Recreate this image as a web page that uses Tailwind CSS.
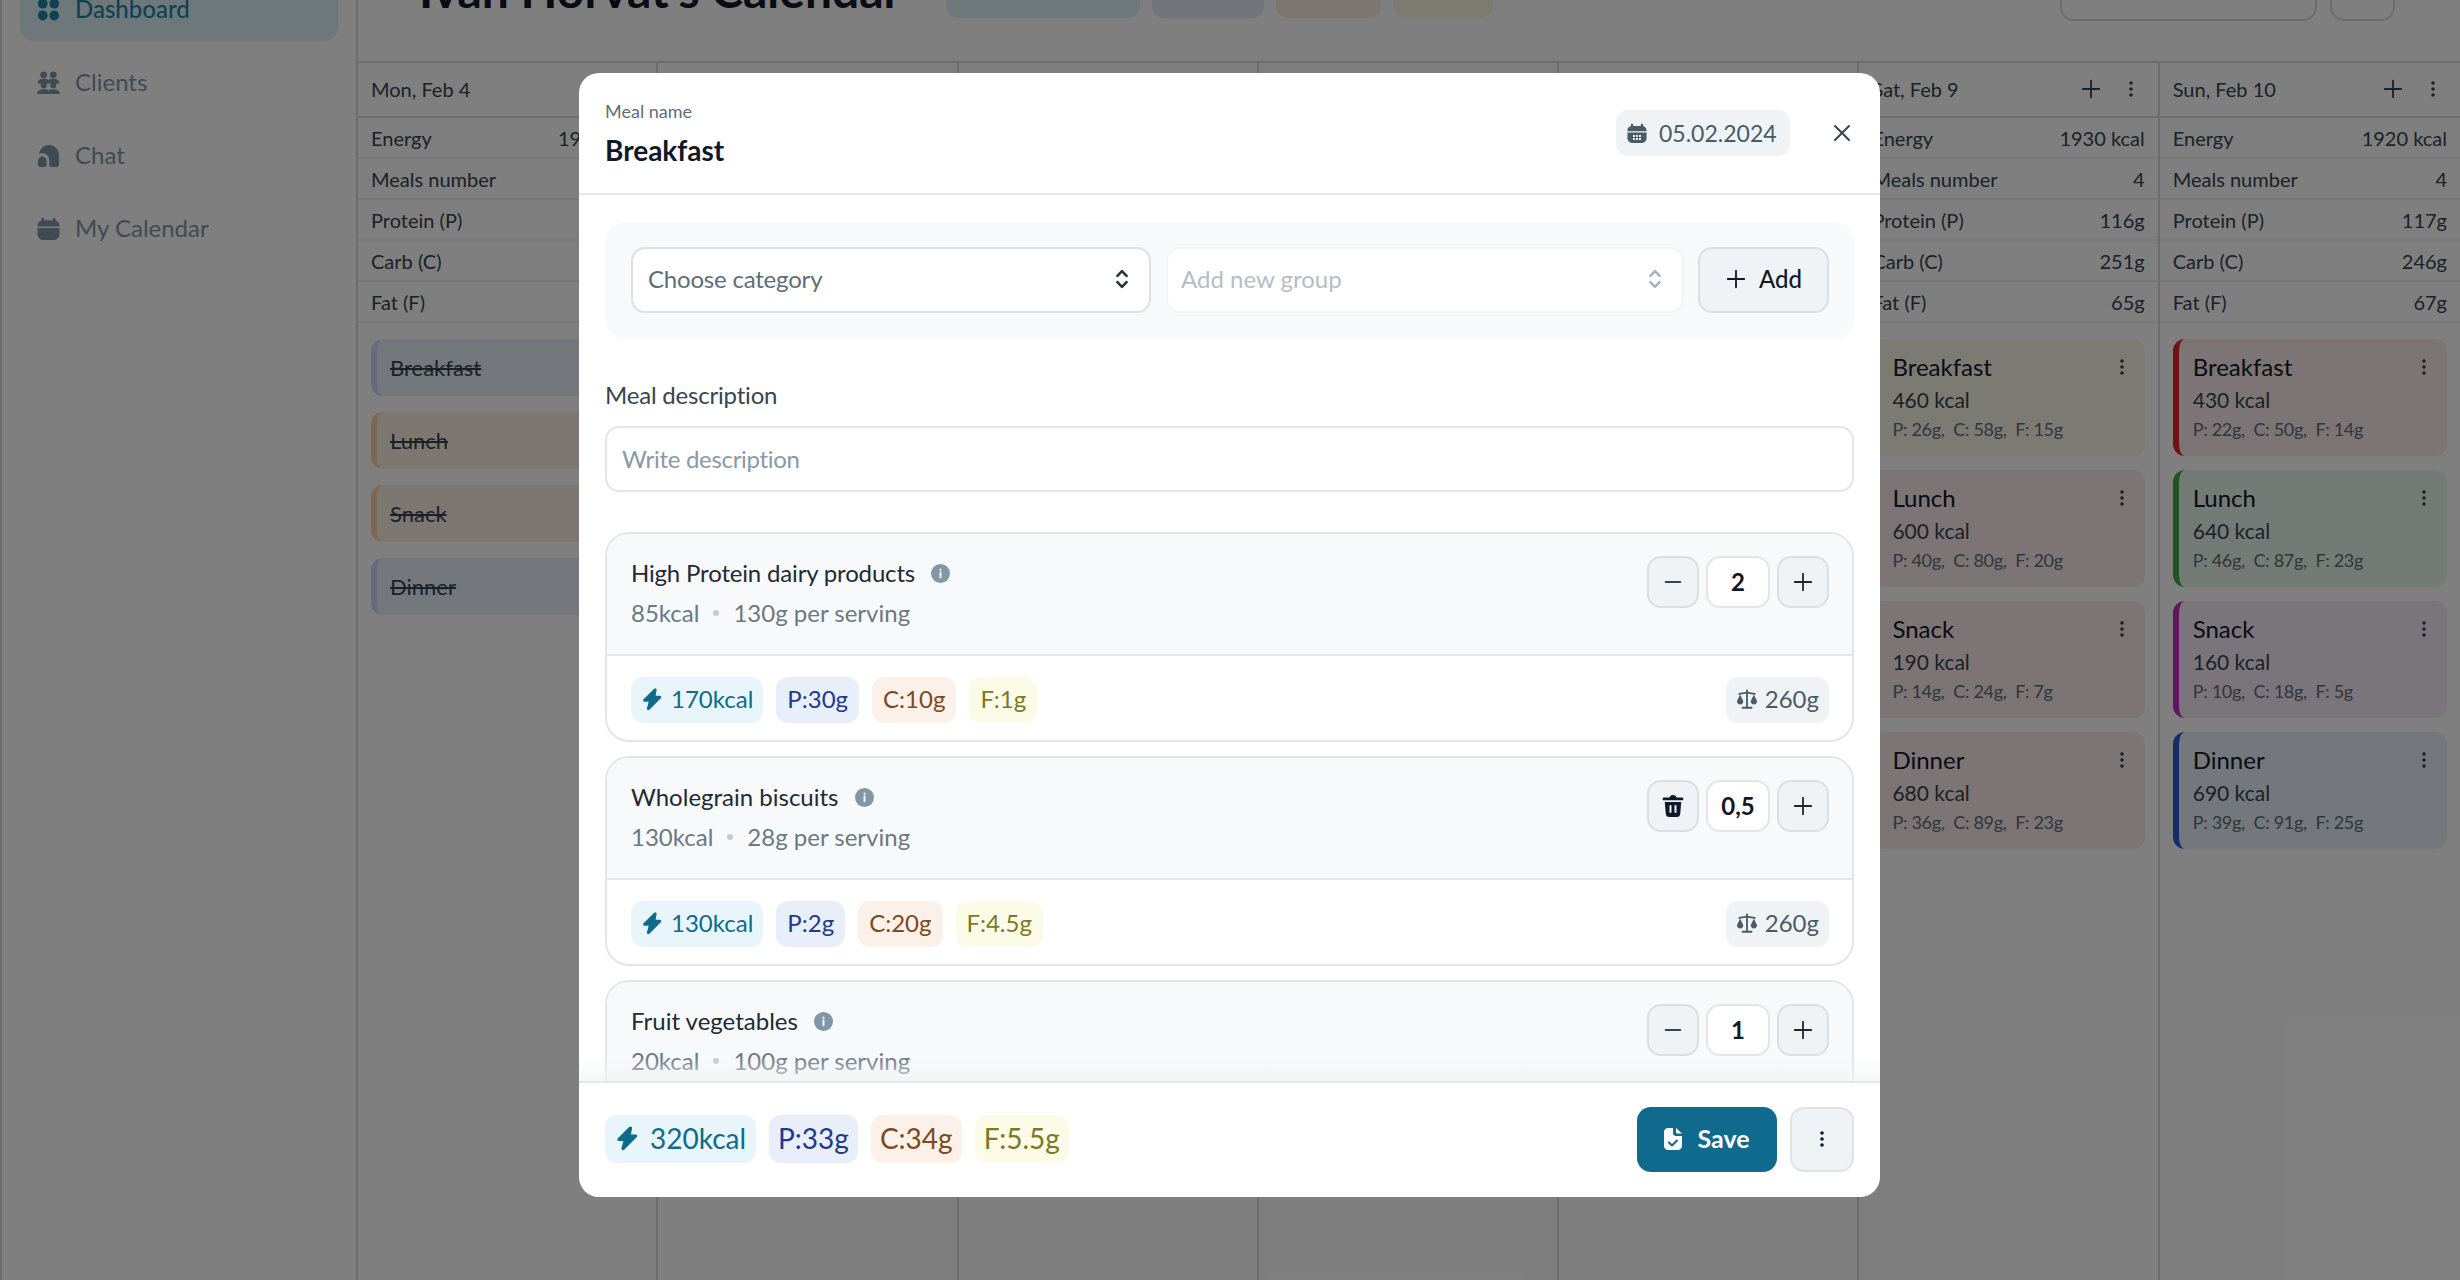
<!DOCTYPE html>
<html lang="en">
<head>
<meta charset="utf-8">
<title>Ivan Horvat's Calendar</title>
<script src="https://cdn.jsdelivr.net/npm/@tailwindcss/browser@4"></script>
</head>
<body class="relative w-[2460px] h-[1280px] overflow-hidden bg-white font-['Lato','Noto_Sans',sans-serif] text-[24px] text-[#37454f]">

<!-- Icon sprites -->
<svg class="hidden">
    <symbol id="i-grid" viewBox="0 0 24 24"><rect x="1" y="0.5" width="10" height="10.5" rx="5"/><rect x="13" y="0.5" width="10" height="10.5" rx="5"/><rect x="1" y="13" width="10" height="10.5" rx="5"/><rect x="13" y="13" width="10" height="10.5" rx="5"/></symbol>
    <symbol id="i-users" viewBox="0 0 24 24"><circle cx="7" cy="4" r="3.500"/><circle cx="17" cy="4" r="3.500"/><path d="M.5 12.500C1 9 3.500 8 7 8c2.200 0 4 .4 5 1.500C13 8.400 14.800 8 17 8c3.500 0 6 1 6.500 4.500-1.200.8-3.500 1.200-6.500 1.200-2.200 0-4-.3-5-.9-1 .6-2.800.9-5 .9-3 0-5.300-.4-6.500-1.200z"/><circle cx="7" cy="15" r="3"/><circle cx="17" cy="15" r="3"/><path d="M0 24c.3-3.500 3-5 7-5 2.200 0 4 .5 5 1.500 1-1 2.800-1.500 5-1.500 4 0 6.700 1.500 7 5z"/></symbol>
    <symbol id="i-chat" viewBox="0 0 24 24"><path d="M1 18c0-2.800 2-5 4.500-5S10 15.200 10 18v3c0 1.700-1.300 3-3 3H4c-1.700 0-3-1.300-3-3z"/><path d="M2 10.500C3 4.500 7.500 1 12.500 1 18.500 1 23 5.500 23 12v9c0 1.700-1.300 3-3 3h-5c-1.300 0-2.200-1-2.200-2.300V17c0-4.500-3.500-7.500-7.500-7.500-1.200 0-2.300.4-3.300 1z"/></symbol>
    <symbol id="i-calendar" viewBox="0 0 24 24"><path d="M6 .8c.8 0 1.400.6 1.400 1.400v1.300h9.200V2.200c0-.8.6-1.400 1.400-1.400s1.400.6 1.400 1.400v1.600c2.500.5 4.100 2.500 4.100 5v1H.500v-1c0-2.500 1.600-4.500 4.100-5V2.200C4.600 1.400 5.200.8 6 .8z"/><path d="M.5 11.500h23V18c0 3.300-2.700 6-6 6h-11c-3.300 0-6-2.700-6-6z"/></symbol>
    <symbol id="i-bolt" viewBox="0 0 24 24"><path d="M15.500 2 4 13.500h6.500L8 22.500 20.500 10H14z" stroke="currentColor" stroke-width="3.200" stroke-linejoin="round"/></symbol>
    <symbol id="i-scale" viewBox="0 0 24 24"><path d="M12 2.500V21M7 21.500h10M3.500 6.500 12 5l8.500 1.500" fill="none" stroke="currentColor" stroke-width="2" stroke-linecap="round"/><path d="M4.500 7 1 14.500c0 2.200 1.600 3.500 3.500 3.500S8 16.700 8 14.500zM19.500 7 16 14.500c0 2.200 1.600 3.500 3.500 3.500s3.500-1.300 3.500-3.500z"/></symbol>
    <symbol id="i-plus" viewBox="0 0 24 24"><path d="M12 3v18M3 12h18" fill="none" stroke="currentColor" stroke-width="2" stroke-linecap="round"/></symbol>
    <symbol id="i-dots" viewBox="0 0 24 24"><circle cx="12" cy="4" r="2.400"/><circle cx="12" cy="12" r="2.400"/><circle cx="12" cy="20" r="2.400"/></symbol>
    <symbol id="i-updown" viewBox="0 0 24 24"><path d="m7 8.500 5-5 5 5M7 15.500l5 5 5-5" fill="none" stroke="currentColor" stroke-width="2.800" stroke-linecap="round" stroke-linejoin="round"/></symbol>
</svg>

<!-- Page behind the modal, scrolled down a little -->
<div class="flex -mt-[40px] h-[1320px]">
    <!-- Sidebar -->
    <aside class="w-[358px] shrink-0 border-l-2 border-r-2 border-[#dadada] pl-[18px] pr-[20px] pt-[17px] flex flex-col gap-[9px] text-[#7f97a7]">
        <a class="h-[64px] w-[318px] rounded-[14px] bg-[#dcf0f4] flex items-center gap-[15px] pl-[17px] text-[#1a85a8] font-medium">
            <svg class="w-[23px] h-[23px] fill-current"><use href="#i-grid"/></svg>Dashboard
        </a>
        <a class="h-[64px] flex items-center gap-[15px] pl-[17px]">
            <svg class="w-[23px] h-[23px] fill-current"><use href="#i-users"/></svg>Clients
        </a>
        <a class="h-[64px] flex items-center gap-[15px] pl-[17px]">
            <svg class="w-[23px] h-[23px] fill-current"><use href="#i-chat"/></svg>Chat
        </a>
        <a class="h-[64px] flex items-center gap-[15px] pl-[17px]">
            <svg class="w-[23px] h-[23px] fill-current"><use href="#i-calendar"/></svg>My Calendar
        </a>
    </aside>

    <main class="flex-1 min-w-0">
        <header class="h-[61px] mb-[40px] flex items-end pl-[61px] pr-[65px]">
            <h1 class="text-[48px] leading-[52px] font-bold text-[#111827] w-[527px] mb-[5px]">Ivan Horvat's Calendar</h1>
            <div class="flex gap-[12px] mb-[3px]">
                <span class="w-[194px] h-[46px] rounded-[12px] bg-[#dff0f4]"></span>
                <span class="w-[112px] h-[46px] rounded-[12px] bg-[#e2e9f6]"></span>
                <span class="w-[105px] h-[46px] rounded-[12px] bg-[#f8ebe0]"></span>
                <span class="w-[100px] h-[46px] rounded-[12px] bg-[#f8f7e2]"></span>
            </div>
            <div class="ml-auto flex gap-[13px]">
                <span class="w-[257px] h-[66px] rounded-[14px] border-2 border-[#d5dadd]"></span>
                <span class="w-[65px] h-[66px] rounded-[14px] border-2 border-[#d5dadd]"></span>
            </div>
        </header>

        <div class="grid grid-cols-7 border-t-2 border-[#dadada] h-[1219px] text-[20px]">
            <!-- Mon -->
            <section class="border-r-2 border-[#dadada]">
                <div class="h-[55px] border-b-2 border-[#dadada] flex items-center px-[13px] pb-[2px]">Mon, Feb 4</div>
                <div class="h-[41px] border-b-2 border-[#eeeeee] flex items-center justify-between px-[13px]"><span>Energy</span><span>1950 kcal</span></div>
                <div class="h-[41px] border-b-2 border-[#eeeeee] flex items-center justify-between px-[13px]"><span>Meals number</span><span>4</span></div>
                <div class="h-[41px] border-b-2 border-[#eeeeee] flex items-center justify-between px-[13px]"><span>Protein (P)</span><span>118g</span></div>
                <div class="h-[41px] border-b-2 border-[#eeeeee] flex items-center justify-between px-[13px]"><span>Carb (C)</span><span>250g</span></div>
                <div class="h-[41px] border-b-2 border-[#eeeeee] flex items-center justify-between px-[13px]"><span>Fat (F)</span><span>66g</span></div>
                <div class="px-[13px] pt-[16px] flex flex-col gap-[16px] text-[22px]">
                    <div class="h-[57px] rounded-[12px] border-l-[6px] border-[#c8d8ff] bg-[#e8eef6] flex items-center pl-[13px] line-through">Breakfast</div>
                    <div class="h-[57px] rounded-[12px] border-l-[6px] border-[#ffcfa8] bg-[#faeee4] flex items-center pl-[13px] line-through">Lunch</div>
                    <div class="h-[57px] rounded-[12px] border-l-[6px] border-[#ffcfa8] bg-[#faeee4] flex items-center pl-[13px] line-through">Snack</div>
                    <div class="h-[57px] rounded-[12px] border-l-[6px] border-[#c8d8ff] bg-[#e8eef6] flex items-center pl-[13px] line-through">Dinner</div>
                </div>
            </section>
            <section class="border-r-2 border-[#dadada]"></section>
            <section class="border-r-2 border-[#dadada]"></section>
            <section class="border-r-2 border-[#dadada]"></section>
            <section class="border-r-2 border-[#dadada]"></section>

            <!-- Sat -->
            <section class="border-r-2 border-[#dadada]">
                <div class="h-[55px] border-b-2 border-[#dadada] flex items-center justify-between pl-[13px] pr-[18px] pb-[2px]">
                    <span>Sat, Feb 9</span>
                    <span class="flex items-center gap-[20px]"><svg class="w-[22px] h-[22px] text-[#37454f]"><use href="#i-plus"/></svg><svg class="w-[18px] h-[18px] fill-current"><use href="#i-dots"/></svg></span>
                </div>
                <div class="h-[41px] border-b-2 border-[#eeeeee] flex items-center justify-between px-[13px]"><span>Energy</span><span>1930 kcal</span></div>
                <div class="h-[41px] border-b-2 border-[#eeeeee] flex items-center justify-between px-[13px]"><span>Meals number</span><span>4</span></div>
                <div class="h-[41px] border-b-2 border-[#eeeeee] flex items-center justify-between px-[13px]"><span>Protein (P)</span><span>116g</span></div>
                <div class="h-[41px] border-b-2 border-[#eeeeee] flex items-center justify-between px-[13px]"><span>Carb (C)</span><span>251g</span></div>
                <div class="h-[41px] border-b-2 border-[#eeeeee] flex items-center justify-between px-[13px]"><span>Fat (F)</span><span>65g</span></div>
                <div class="px-[13px] pt-[16px] flex flex-col gap-[14px]">
                    <div class="h-[117px] rounded-[12px] border-l-[6px] border-[#f7f7e8] bg-[#f7f7e8] pl-[14px] pr-[13px] pt-[11px] relative">
                        <p class="leading-[34px] text-[24px] text-[#111827]">Breakfast</p><p class="leading-[32px] text-[21px]">460 kcal</p><p class="leading-[26px] text-[18px] tracking-[-0.3px] text-[#5e6e78]">P: 26g,&nbsp; C: 58g,&nbsp; F: 15g</p>
                        <svg class="absolute top-[19px] right-[14px] w-[18px] h-[18px] fill-current"><use href="#i-dots"/></svg>
                    </div>
                    <div class="h-[117px] rounded-[12px] border-l-[6px] border-[#f9e8ea] bg-[#f9e8ea] pl-[14px] pr-[13px] pt-[11px] relative">
                        <p class="leading-[34px] text-[24px] text-[#111827]">Lunch</p><p class="leading-[32px] text-[21px]">600 kcal</p><p class="leading-[26px] text-[18px] tracking-[-0.3px] text-[#5e6e78]">P: 40g,&nbsp; C: 80g,&nbsp; F: 20g</p>
                        <svg class="absolute top-[19px] right-[14px] w-[18px] h-[18px] fill-current"><use href="#i-dots"/></svg>
                    </div>
                    <div class="h-[117px] rounded-[12px] border-l-[6px] border-[#f9e8ea] bg-[#f9e8ea] pl-[14px] pr-[13px] pt-[11px] relative">
                        <p class="leading-[34px] text-[24px] text-[#111827]">Snack</p><p class="leading-[32px] text-[21px]">190 kcal</p><p class="leading-[26px] text-[18px] tracking-[-0.3px] text-[#5e6e78]">P: 14g,&nbsp; C: 24g,&nbsp; F: 7g</p>
                        <svg class="absolute top-[19px] right-[14px] w-[18px] h-[18px] fill-current"><use href="#i-dots"/></svg>
                    </div>
                    <div class="h-[117px] rounded-[12px] border-l-[6px] border-[#f9e8ea] bg-[#f9e8ea] pl-[14px] pr-[13px] pt-[11px] relative">
                        <p class="leading-[34px] text-[24px] text-[#111827]">Dinner</p><p class="leading-[32px] text-[21px]">680 kcal</p><p class="leading-[26px] text-[18px] tracking-[-0.3px] text-[#5e6e78]">P: 36g,&nbsp; C: 89g,&nbsp; F: 23g</p>
                        <svg class="absolute top-[19px] right-[14px] w-[18px] h-[18px] fill-current"><use href="#i-dots"/></svg>
                    </div>
                </div>
            </section>

            <!-- Sun -->
            <section>
                <div class="h-[55px] border-b-2 border-[#dadada] flex items-center justify-between pl-[13px] pr-[18px] pb-[2px]">
                    <span>Sun, Feb 10</span>
                    <span class="flex items-center gap-[20px]"><svg class="w-[22px] h-[22px] text-[#37454f]"><use href="#i-plus"/></svg><svg class="w-[18px] h-[18px] fill-current"><use href="#i-dots"/></svg></span>
                </div>
                <div class="h-[41px] border-b-2 border-[#eeeeee] flex items-center justify-between px-[13px]"><span>Energy</span><span>1920 kcal</span></div>
                <div class="h-[41px] border-b-2 border-[#eeeeee] flex items-center justify-between px-[13px]"><span>Meals number</span><span>4</span></div>
                <div class="h-[41px] border-b-2 border-[#eeeeee] flex items-center justify-between px-[13px]"><span>Protein (P)</span><span>117g</span></div>
                <div class="h-[41px] border-b-2 border-[#eeeeee] flex items-center justify-between px-[13px]"><span>Carb (C)</span><span>246g</span></div>
                <div class="h-[41px] border-b-2 border-[#eeeeee] flex items-center justify-between px-[13px]"><span>Fat (F)</span><span>67g</span></div>
                <div class="px-[13px] pt-[16px] flex flex-col gap-[14px]">
                    <div class="h-[117px] rounded-[12px] border-l-[6px] border-[#e02424] bg-[#f9e8ea] pl-[14px] pr-[13px] pt-[11px] relative">
                        <p class="leading-[34px] text-[24px] text-[#111827]">Breakfast</p><p class="leading-[32px] text-[21px]">430 kcal</p><p class="leading-[26px] text-[18px] tracking-[-0.3px] text-[#5e6e78]">P: 22g,&nbsp; C: 50g,&nbsp; F: 14g</p>
                        <svg class="absolute top-[19px] right-[14px] w-[18px] h-[18px] fill-current"><use href="#i-dots"/></svg>
                    </div>
                    <div class="h-[117px] rounded-[12px] border-l-[6px] border-[#3cae3c] bg-[#e8f4ec] pl-[14px] pr-[13px] pt-[11px] relative">
                        <p class="leading-[34px] text-[24px] text-[#111827]">Lunch</p><p class="leading-[32px] text-[21px]">640 kcal</p><p class="leading-[26px] text-[18px] tracking-[-0.3px] text-[#5e6e78]">P: 46g,&nbsp; C: 87g,&nbsp; F: 23g</p>
                        <svg class="absolute top-[19px] right-[14px] w-[18px] h-[18px] fill-current"><use href="#i-dots"/></svg>
                    </div>
                    <div class="h-[117px] rounded-[12px] border-l-[6px] border-[#c42cc4] bg-[#f4e8f6] pl-[14px] pr-[13px] pt-[11px] relative">
                        <p class="leading-[34px] text-[24px] text-[#111827]">Snack</p><p class="leading-[32px] text-[21px]">160 kcal</p><p class="leading-[26px] text-[18px] tracking-[-0.3px] text-[#5e6e78]">P: 10g,&nbsp; C: 18g,&nbsp; F: 5g</p>
                        <svg class="absolute top-[19px] right-[14px] w-[18px] h-[18px] fill-current"><use href="#i-dots"/></svg>
                    </div>
                    <div class="h-[117px] rounded-[12px] border-l-[6px] border-[#2c5ad0] bg-[#e8eef6] pl-[14px] pr-[13px] pt-[11px] relative">
                        <p class="leading-[34px] text-[24px] text-[#111827]">Dinner</p><p class="leading-[32px] text-[21px]">690 kcal</p><p class="leading-[26px] text-[18px] tracking-[-0.3px] text-[#5e6e78]">P: 39g,&nbsp; C: 91g,&nbsp; F: 25g</p>
                        <svg class="absolute top-[19px] right-[14px] w-[18px] h-[18px] fill-current"><use href="#i-dots"/></svg>
                    </div>
                </div>
            </section>
        </div>
    </main>
</div>

<!-- Backdrop -->
<div class="absolute inset-0 bg-black/50"></div>

<!-- Meal modal -->
<div class="absolute left-[579px] top-[73px] w-[1301px] h-[1124px] rounded-[20px] bg-white overflow-hidden flex flex-col">
    <div class="h-[122px] shrink-0 border-b-2 border-[#e4e7ea] px-[26px] flex items-center justify-between">
        <div>
            <p class="text-[18px] leading-[24px] text-[#5e6e78]">Meal name</p>
            <h2 class="mt-[9px] text-[28px] leading-[36px] font-bold text-[#111827]">Breakfast</h2>
        </div>
        <div class="flex items-center gap-[40px]">
            <span class="w-[174px] h-[46px] rounded-[12px] bg-[#f0f3f5] flex items-center gap-[12px] pl-[11px] text-[23px] text-[#4a5b66]">
                <svg class="w-[20px] h-[20px] fill-current"><use href="#i-calendar"/><path d="M6 12h2v2H6zM9 12h2v2H9zM12 12h2v2h-2zM6 15h2v2H6zM9 15h2v2H9zM12 15h2v2h-2z" fill="#f0f3f5"/></svg>05.02.2024
            </span>
            <svg class="w-[24px] h-[24px]" viewBox="0 0 24 24"><path d="m5 5 14 14M19 5 5 19" fill="none" stroke="#37454f" stroke-width="2" stroke-linecap="round"/></svg>
        </div>
    </div>

    <div class="relative flex-1 min-h-0 overflow-hidden px-[26px] pt-[27px]">
        <div class="h-[117px] rounded-[20px] bg-[#f8f9fb] pl-[26px] pb-[1px] flex items-center gap-[15px]">
            <div class="w-[520px] h-[66px] rounded-[14px] border-2 border-[#dde1e4] bg-white pl-[15px] pr-[16px] pb-[2px] flex items-center justify-between tracking-[-0.2px] text-[#5e6e78]">
                Choose category
                <svg class="w-[22px] h-[22px] text-[#26333c]"><use href="#i-updown"/></svg>
            </div>
            <div class="w-[518px] h-[66px] rounded-[14px] border-2 border-[#f2f4f5] bg-white pl-[13px] pr-[16px] pb-[2px] flex items-center justify-between text-[#b4bec5]">
                Add new group
                <svg class="w-[22px] h-[22px] text-[#a6b1b8]"><use href="#i-updown"/></svg>
            </div>
            <button class="-ml-[1px] w-[131px] h-[66px] rounded-[14px] border-2 border-[#dcdfe2] bg-[#f0f3f5] pb-[2px] flex items-center justify-center gap-[12px] font-medium text-[#111827]">
                <svg class="w-[22px] h-[22px]"><use href="#i-plus"/></svg>Add
            </button>
        </div>

        <label class="block mt-[38px] mb-[13px] leading-[36px] tracking-[-0.2px]">Meal description</label>
        <div class="h-[66px] rounded-[14px] border-2 border-[#e3e6e9] pl-[15px] pb-[1px] flex items-center tracking-[-0.3px] text-[#8b99a3]">Write description</div>

        <div class="mt-[40px] flex flex-col gap-[14px]">
            <!-- High Protein -->
            <article class="h-[210px] shrink-0 rounded-[24px] border-2 border-[#e3e6e9] overflow-hidden">
                <div class="h-[122px] border-b-2 border-[#e3e6e9] bg-[#f8f9fb] pl-[24px] pr-[23px] flex justify-between">
                    <div class="pt-[21px]">
                        <p class="leading-[36px] text-[#1f2a33] flex items-center gap-[16px]"><span class="tracking-[-0.17px]">High Protein dairy products</span>
                            <svg class="w-[19px] h-[19px]" viewBox="0 0 20 20"><circle cx="10" cy="10" r="10" fill="#7f97a7"/><path d="M10 9v5M10 5.800v.4" stroke="#fff" stroke-width="2" stroke-linecap="round"/></svg>
                        </p>
                        <p class="mt-[4px] leading-[36px] text-[#6a7984] flex items-center gap-[14px]">85kcal<span class="w-[6px] h-[6px] rounded-full bg-[#c3cbd1]"></span>130g per serving</p>
                    </div>
                    <div class="pt-[22px] flex gap-[7px]">
                        <button class="w-[52px] h-[52px] rounded-[14px] border-2 border-[#dcdfe2] bg-[#f0f3f5] flex items-center justify-center"><svg class="w-[22px] h-[22px]" viewBox="0 0 24 24"><path d="M4 12h16" stroke="#37454f" stroke-width="2" stroke-linecap="round"/></svg></button>
                        <span class="w-[64px] h-[52px] rounded-[14px] border-2 border-[#e3e6e9] bg-white pb-[1px] flex items-center justify-center font-bold text-[#111827]">2</span>
                        <button class="w-[52px] h-[52px] rounded-[14px] border-2 border-[#dcdfe2] bg-[#f0f3f5] flex items-center justify-center"><svg class="w-[22px] h-[22px] text-[#1f2a33]"><use href="#i-plus"/></svg></button>
                    </div>
                </div>
                <div class="pl-[24px] pr-[23px] pt-[21px] flex justify-between">
                    <div class="flex gap-[13px]">
                        <span class="h-[46px] rounded-[12px] bg-[#e8f6fc] text-[#0f6a8c] pb-[2px] flex items-center gap-[8px] px-[10px]"><svg class="w-[22px] h-[22px] fill-current"><use href="#i-bolt"/></svg>170kcal</span>
                        <span class="h-[46px] rounded-[12px] bg-[#e8eefa] text-[#1e3a8a] pb-[2px] flex items-center px-[11px]">P:30g</span>
                        <span class="h-[46px] rounded-[12px] bg-[#fbf1e9] text-[#7c4a1e] pb-[2px] flex items-center px-[11px]">C:10g</span>
                        <span class="h-[46px] rounded-[12px] bg-[#fbfbe8] text-[#7a7a22] pb-[2px] flex items-center px-[11px]">F:1g</span>
                    </div>
                    <span class="h-[46px] rounded-[12px] bg-[#f0f3f5] text-[#4a5b66] pb-[2px] flex items-center gap-[7px] px-[10px]"><svg class="w-[22px] h-[22px] fill-current"><use href="#i-scale"/></svg>260g</span>
                </div>
            </article>

            <!-- Wholegrain -->
            <article class="h-[210px] shrink-0 rounded-[24px] border-2 border-[#e3e6e9] overflow-hidden">
                <div class="h-[122px] border-b-2 border-[#e3e6e9] bg-[#f8f9fb] pl-[24px] pr-[23px] flex justify-between">
                    <div class="pt-[21px]">
                        <p class="leading-[36px] text-[#1f2a33] flex items-center gap-[16px]">Wholegrain biscuits
                            <svg class="w-[19px] h-[19px]" viewBox="0 0 20 20"><circle cx="10" cy="10" r="10" fill="#7f97a7"/><path d="M10 9v5M10 5.800v.4" stroke="#fff" stroke-width="2" stroke-linecap="round"/></svg>
                        </p>
                        <p class="mt-[4px] leading-[36px] text-[#6a7984] flex items-center gap-[14px]">130kcal<span class="w-[6px] h-[6px] rounded-full bg-[#c3cbd1]"></span>28g per serving</p>
                    </div>
                    <div class="pt-[22px] flex gap-[7px]">
                        <button class="w-[52px] h-[52px] rounded-[14px] border-2 border-[#dcdfe2] bg-[#f0f3f5] flex items-center justify-center">
                            <svg class="w-[24px] h-[24px]" viewBox="0 0 24 24" fill="#111827"><path d="M8.500 3.500C9 1.800 10.300 1 12 1s3 .8 3.500 2.500H21c.8 0 1.400.6 1.400 1.400S21.800 6.300 21 6.300H3c-.8 0-1.400-.6-1.400-1.400S2.200 3.500 3 3.500z"/><path d="M3.800 8h16.400l-1 12c-.2 1.800-1.600 3-3.300 3H8.100c-1.700 0-3.100-1.200-3.300-3z"/><path d="M9.500 12v6M14.500 12v6" stroke="#f0f3f5" stroke-width="2" stroke-linecap="round"/></svg>
                        </button>
                        <span class="w-[64px] h-[52px] rounded-[14px] border-2 border-[#e3e6e9] bg-white pb-[1px] flex items-center justify-center font-bold text-[#111827]">0,5</span>
                        <button class="w-[52px] h-[52px] rounded-[14px] border-2 border-[#dcdfe2] bg-[#f0f3f5] flex items-center justify-center"><svg class="w-[22px] h-[22px] text-[#1f2a33]"><use href="#i-plus"/></svg></button>
                    </div>
                </div>
                <div class="pl-[24px] pr-[23px] pt-[21px] flex justify-between">
                    <div class="flex gap-[13px]">
                        <span class="h-[46px] rounded-[12px] bg-[#e8f6fc] text-[#0f6a8c] pb-[2px] flex items-center gap-[8px] px-[10px]"><svg class="w-[22px] h-[22px] fill-current"><use href="#i-bolt"/></svg>130kcal</span>
                        <span class="h-[46px] rounded-[12px] bg-[#e8eefa] text-[#1e3a8a] pb-[2px] flex items-center px-[11px]">P:2g</span>
                        <span class="h-[46px] rounded-[12px] bg-[#fbf1e9] text-[#7c4a1e] pb-[2px] flex items-center px-[11px]">C:20g</span>
                        <span class="h-[46px] rounded-[12px] bg-[#fbfbe8] text-[#7a7a22] pb-[2px] flex items-center px-[11px]">F:4.5g</span>
                    </div>
                    <span class="h-[46px] rounded-[12px] bg-[#f0f3f5] text-[#4a5b66] pb-[2px] flex items-center gap-[7px] px-[10px]"><svg class="w-[22px] h-[22px] fill-current"><use href="#i-scale"/></svg>260g</span>
                </div>
            </article>

            <!-- Fruit vegetables -->
            <article class="h-[210px] shrink-0 rounded-[24px] border-2 border-[#e3e6e9] overflow-hidden">
                <div class="h-[122px] border-b-2 border-[#e3e6e9] bg-[#f8f9fb] pl-[24px] pr-[23px] flex justify-between">
                    <div class="pt-[21px]">
                        <p class="leading-[36px] text-[#1f2a33] flex items-center gap-[16px]">Fruit vegetables
                            <svg class="w-[19px] h-[19px]" viewBox="0 0 20 20"><circle cx="10" cy="10" r="10" fill="#7f97a7"/><path d="M10 9v5M10 5.800v.4" stroke="#fff" stroke-width="2" stroke-linecap="round"/></svg>
                        </p>
                        <p class="mt-[4px] leading-[36px] text-[#6a7984] flex items-center gap-[14px]">20kcal<span class="w-[6px] h-[6px] rounded-full bg-[#c3cbd1]"></span>100g per serving</p>
                    </div>
                    <div class="pt-[22px] flex gap-[7px]">
                        <button class="w-[52px] h-[52px] rounded-[14px] border-2 border-[#dcdfe2] bg-[#f0f3f5] flex items-center justify-center"><svg class="w-[22px] h-[22px]" viewBox="0 0 24 24"><path d="M4 12h16" stroke="#37454f" stroke-width="2" stroke-linecap="round"/></svg></button>
                        <span class="w-[64px] h-[52px] rounded-[14px] border-2 border-[#e3e6e9] bg-white pb-[1px] flex items-center justify-center font-bold text-[#111827]">1</span>
                        <button class="w-[52px] h-[52px] rounded-[14px] border-2 border-[#dcdfe2] bg-[#f0f3f5] flex items-center justify-center"><svg class="w-[22px] h-[22px] text-[#1f2a33]"><use href="#i-plus"/></svg></button>
                    </div>
                </div>
            </article>
        </div>
        <div class="absolute left-0 right-0 bottom-0 h-[24px] bg-gradient-to-b from-transparent to-[#f1f3f5]/70"></div>
    </div>

    <div class="h-[116px] shrink-0 border-t-2 border-[#e4e7ea] px-[26px] pb-[2px] flex items-center justify-between">
        <div class="flex gap-[13px] text-[28px]">
            <span class="h-[48px] rounded-[12px] bg-[#e8f6fc] text-[#0f6a8c] pb-[2px] flex items-center gap-[11px] px-[10px]"><svg class="w-[24px] h-[24px] fill-current"><use href="#i-bolt"/></svg>320kcal</span>
            <span class="h-[48px] rounded-[12px] bg-[#e8eefa] text-[#1e3a8a] pb-[2px] flex items-center px-[9px]">P:33g</span>
            <span class="h-[48px] rounded-[12px] bg-[#fbf1e9] text-[#7c4a1e] pb-[2px] flex items-center px-[9px]">C:34g</span>
            <span class="h-[48px] rounded-[12px] bg-[#fbfbe8] text-[#7a7a22] pb-[2px] flex items-center px-[9px]">F:5.5g</span>
        </div>
        <div class="flex gap-[13px]">
            <button class="w-[140px] h-[65px] rounded-[14px] bg-[#106a8e] text-white text-[25px] font-bold flex items-center justify-center gap-[15px]">
                <svg class="w-[18px] h-[22px]" viewBox="0 0 18 22"><path d="M4 0h5v5c0 1.700 1.300 3 3 3h6v10c0 2.200-1.800 4-4 4H4c-2.200 0-4-1.800-4-4V4c0-2.200 1.800-4 4-4zM12 0l6 5.500h-4.500C12.700 5.500 12 4.800 12 4z" fill="#fff"/><path d="m5 14.500 3 3 5-5" fill="none" stroke="#106a8e" stroke-width="2" stroke-linecap="round" stroke-linejoin="round"/></svg>
                Save
            </button>
            <button class="w-[64px] h-[65px] rounded-[14px] border-2 border-[#e0e3e6] bg-[#f0f3f5] flex items-center justify-center text-[#111827]"><svg class="w-[18px] h-[18px] fill-current"><use href="#i-dots"/></svg></button>
        </div>
    </div>
</div>
</body>
</html>
